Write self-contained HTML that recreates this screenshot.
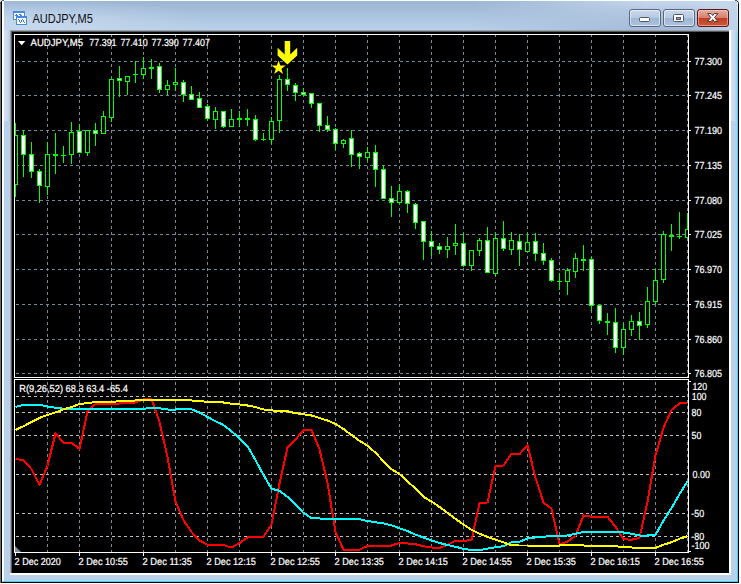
<!DOCTYPE html>
<html lang="en"><head><meta charset="utf-8"><title>AUDJPY,M5</title>
<style>html,body{margin:0;padding:0;background:#fff;overflow:hidden}svg{display:block}text{font-family:"Liberation Sans",sans-serif;white-space:pre}text.c{text-rendering:geometricPrecision;stroke:#fff;stroke-width:.22px}</style>
</head><body>
<svg width="741" height="584" viewBox="0 0 741 584">
<defs>
<linearGradient id="tb" x1="0" y1="0" x2="0" y2="1"><stop offset="0" stop-color="#9bb5d3"/><stop offset="1" stop-color="#b9d1ea"/></linearGradient>
<radialGradient id="tl" gradientUnits="userSpaceOnUse" cx="0" cy="0" r="1" gradientTransform="translate(28 26) scale(190 27)"><stop offset="0" stop-color="#c8d9ed" stop-opacity="0.95"/><stop offset="0.5" stop-color="#c4d6eb" stop-opacity="0.6"/><stop offset="1" stop-color="#b9d1ea" stop-opacity="0"/></radialGradient>
<linearGradient id="tr" x1="0" y1="0" x2="0" y2="1"><stop offset="0" stop-color="#c6d8ec"/><stop offset="0.35" stop-color="#b4c9e2"/><stop offset="1" stop-color="#a2b9d6"/></linearGradient>
<linearGradient id="trm" gradientUnits="userSpaceOnUse" x1="470" y1="0" x2="650" y2="0"><stop offset="0" stop-color="#fff" stop-opacity="0"/><stop offset="1" stop-color="#fff" stop-opacity="1"/></linearGradient>
<mask id="mr" maskUnits="userSpaceOnUse" x="460" y="0" width="281" height="32"><rect x="460" y="0" width="281" height="32" fill="url(#trm)"/></mask>
<linearGradient id="cy" gradientUnits="userSpaceOnUse" x1="0" y1="2" x2="0" y2="60"><stop offset="0" stop-color="#eaf4fc"/><stop offset="0.4" stop-color="#a8e4f6"/><stop offset="1" stop-color="#3fd2f2"/></linearGradient>
<linearGradient id="bt" x1="0" y1="0" x2="0" y2="1"><stop offset="0" stop-color="#cbd9ec"/><stop offset="0.48" stop-color="#b6c9e2"/><stop offset="0.5" stop-color="#9fb6d4"/><stop offset="1" stop-color="#adc3de"/></linearGradient>
<linearGradient id="cl" x1="0" y1="0" x2="0" y2="1"><stop offset="0" stop-color="#e8b1a5"/><stop offset="0.48" stop-color="#d6806d"/><stop offset="0.5" stop-color="#c03c20"/><stop offset="1" stop-color="#cd5a3e"/></linearGradient>
<clipPath id="cm"><rect x="15" y="35" width="673" height="342"/></clipPath>
<clipPath id="ci"><rect x="15" y="380" width="673" height="172"/></clipPath>
<clipPath id="cx"><rect x="15" y="35" width="673" height="517"/></clipPath>
<linearGradient id="rf" x1="0" y1="0" x2="0" y2="1"><stop offset="0" stop-color="#c6d8ec"/><stop offset="1" stop-color="#b9d1ea"/></linearGradient>
<linearGradient id="sf" x1="0" y1="0" x2="1" y2="0"><stop offset="0" stop-color="#d4e3f4"/><stop offset="0.6" stop-color="#c6d9ee"/><stop offset="1" stop-color="#b2cae6"/></linearGradient>
<linearGradient id="te" x1="0" y1="0" x2="1" y2="0"><stop offset="0" stop-color="#c6d9ee" stop-opacity="0"/><stop offset="0.8" stop-color="#c6d9ee" stop-opacity="0.75"/><stop offset="1" stop-color="#c2d6ec" stop-opacity="0.9"/></linearGradient>
</defs>
<g shape-rendering="crispEdges">
<rect x="0" y="0" width="741" height="584" fill="#ffffff"/>
<rect x="0" y="0" width="739" height="583" fill="#b9d1ea"/>
<rect x="2" y="1" width="736" height="29" fill="url(#tb)"/>
<rect x="2" y="1" width="230" height="29" fill="url(#tl)"/>
<rect x="460" y="1" width="278" height="29" fill="url(#tr)" mask="url(#mr)"/>
<rect x="4" y="30" width="6" height="91" fill="url(#sf)"/>
<rect x="690" y="1" width="48" height="29" fill="url(#te)"/>
<rect x="731" y="30" width="6" height="91" fill="url(#sf)"/>
<rect x="4" y="0" width="731" height="1" fill="#fbfcfe"/>
<rect x="0" y="4" width="1" height="579" fill="#6e6e6e"/>
<rect x="1" y="2" width="1" height="581" fill="#000000"/>
<rect x="2" y="1" width="2" height="580" fill="#ffffff"/>
<rect x="737" y="2" width="1" height="580" fill="url(#cy)"/>
<rect x="738" y="3" width="1" height="580" fill="#000000"/>
<rect x="3" y="581" width="735" height="1" fill="#3fd2f2"/>
<rect x="1" y="582" width="738" height="1" fill="#000000"/>
<rect x="0" y="0" width="4" height="1" fill="#e0e0e0"/><rect x="0" y="1" width="1" height="3" fill="#e0e0e0"/>
<rect x="2" y="0" width="2" height="1" fill="#555555"/><rect x="1" y="1" width="1" height="1" fill="#222222"/><rect x="0" y="2" width="1" height="2" fill="#555555"/>
<rect x="735" y="0" width="4" height="1" fill="#e8e8e8"/><rect x="738" y="0" width="1" height="3" fill="#e8e8e8"/>
<rect x="735" y="0" width="2" height="1" fill="#555555"/><rect x="737" y="1" width="1" height="1" fill="#222222"/><rect x="738" y="2" width="1" height="2" fill="#444444"/>
<rect x="10" y="30" width="721" height="545" fill="#ffffff"/>
<rect x="10" y="30" width="719" height="543" fill="#9aa3ae"/>
<rect x="11" y="31" width="718" height="542" fill="#5a5a5a"/>
<rect x="12" y="32" width="717" height="541" fill="#000000"/>
</g>
<g shape-rendering="crispEdges">
<rect x="13" y="11" width="12" height="9" fill="#4784ff"/>
<path d="M13.5 11.5H24.5V19.5H13.5Z" fill="none" stroke="#3f9c86" stroke-opacity="0.75" stroke-width="1" stroke-dasharray="1 1"/>
<rect x="14" y="13" width="10" height="6" fill="#ffffff"/>
<rect x="15" y="15" width="1" height="1" fill="#3a78f2"/>
<rect x="16" y="14" width="1" height="1" fill="#3a78f2"/>
<rect x="16" y="15" width="1" height="1" fill="#3a78f2"/>
<rect x="17" y="15" width="1" height="1" fill="#3a78f2"/>
<rect x="19" y="14" width="1" height="1" fill="#3a78f2"/>
<rect x="20" y="14" width="1" height="1" fill="#3a78f2"/>
<rect x="20" y="15" width="1" height="1" fill="#3a78f2"/>
<rect x="21" y="15" width="1" height="1" fill="#3a78f2"/>
<rect x="21" y="16" width="1" height="1" fill="#3a78f2"/>
<rect x="16" y="16" width="11" height="9" fill="#4784ff"/>
<path d="M16.5 16.5H26.5V24.5H16.5Z" fill="none" stroke="#3f9c86" stroke-opacity="0.75" stroke-width="1" stroke-dasharray="1 1"/>
<rect x="17" y="18" width="9" height="6" fill="#ffffff"/>
<rect x="18" y="19" width="1" height="1" fill="#3a78f2"/>
<rect x="19" y="20" width="1" height="1" fill="#3a78f2"/>
<rect x="19" y="21" width="1" height="1" fill="#3a78f2"/>
<rect x="20" y="22" width="1" height="1" fill="#3a78f2"/>
<rect x="21" y="21" width="1" height="1" fill="#3a78f2"/>
<rect x="21" y="20" width="1" height="1" fill="#3a78f2"/>
<rect x="22" y="19" width="1" height="1" fill="#3a78f2"/>
<rect x="23" y="20" width="1" height="1" fill="#3a78f2"/>
<rect x="23" y="21" width="1" height="1" fill="#3a78f2"/>
<rect x="24" y="22" width="1" height="1" fill="#3a78f2"/>
</g>
<text x="32.4" y="23" font-size="13" fill="#101018" textLength="60.4" lengthAdjust="spacingAndGlyphs">AUDJPY,M5</text>
<rect x="629.5" y="9.5" width="31" height="17" rx="2.5" ry="2.5" fill="url(#bt)" stroke="#56677f" stroke-width="1"/>
<rect x="630.5" y="10.5" width="29" height="15" rx="2" ry="2" fill="none" stroke="#ffffff" stroke-width="1" opacity="0.55"/>
<rect x="663.5" y="9.5" width="31" height="17" rx="2.5" ry="2.5" fill="url(#bt)" stroke="#56677f" stroke-width="1"/>
<rect x="664.5" y="10.5" width="29" height="15" rx="2" ry="2" fill="none" stroke="#ffffff" stroke-width="1" opacity="0.55"/>
<rect x="697.5" y="9.5" width="31" height="17" rx="2.5" ry="2.5" fill="url(#cl)" stroke="#5b1a14" stroke-width="1"/>
<rect x="698.5" y="10.5" width="29" height="15" rx="2" ry="2" fill="none" stroke="#ffd0c4" stroke-width="1" opacity="0.55"/>
<rect x="639.5" y="17.5" width="10" height="4" rx="1" fill="#ffffff" stroke="#4d5566" stroke-width="1"/>
<rect x="673.5" y="14.5" width="10" height="7" rx="1" fill="#ffffff" stroke="#4d5566" stroke-width="1"/>
<rect x="676.5" y="17.5" width="4" height="2" fill="#8fa9cc" stroke="#4d5566" stroke-width="1"/>
<path d="M707.6 13.6 h3.6 l1.5 1.9 l1.5 -1.9 h3.6 l-3.2 3.9 l3.2 3.9 h-3.6 l-1.5 -1.9 l-1.5 1.9 h-3.6 l3.2 -3.9 z" fill="#ffffff" stroke="#4a3636" stroke-width="1" stroke-linejoin="round"/>
<g shape-rendering="crispEdges" fill="none" stroke-width="1">
<path d="M47.5 34V377M47.5 376V553M79.5 34V377M79.5 376V553M111.5 34V377M111.5 376V553M143.5 34V377M143.5 376V553M175.5 34V377M175.5 376V553M207.5 34V377M207.5 376V553M239.5 34V377M239.5 376V553M271.5 34V377M271.5 376V553M303.5 34V377M303.5 376V553M335.5 34V377M335.5 376V553M367.5 34V377M367.5 376V553M399.5 34V377M399.5 376V553M431.5 34V377M431.5 376V553M463.5 34V377M463.5 376V553M495.5 34V377M495.5 376V553M527.5 34V377M527.5 376V553M559.5 34V377M559.5 376V553M591.5 34V377M591.5 376V553M623.5 34V377M623.5 376V553M655.5 34V377M655.5 376V553M687.5 34V377M687.5 376V553" stroke="#778899" stroke-dasharray="3 3"/>
<path d="M10 61.5H688M10 95.5H688M10 130.5H688M10 165.5H688M10 200.5H688M10 234.5H688M10 269.5H688M10 304.5H688M10 339.5H688M10 373.5H688" stroke="#778899" stroke-dasharray="3 3" clip-path="url(#cx)"/>
<path d="M10 396.5H688M10 412.5H688M10 435.5H688M10 474.5H688M10 513.5H688M10 536.5H688" stroke="#c0c0c0" stroke-dasharray="3 3" clip-path="url(#cx)"/>
</g>
<g shape-rendering="crispEdges" clip-path="url(#cm)">
<path d="M15.5 123V197M23.5 130V177M31.5 142V178M39.5 169V203M47.5 142V195M55.5 133V174M63.5 146V163M71.5 122V164M79.5 124V153M87.5 130V156M95.5 123V146M103.5 111V134M111.5 79V122M119.5 66V97M127.5 76V95M135.5 61V83M143.5 57V79M151.5 59V79M159.5 63V93M167.5 80V95M175.5 68V91M183.5 80V102M191.5 86V100M199.5 92V108M207.5 104V121M215.5 107V129M223.5 111V128M231.5 109V127M239.5 111V127M247.5 109V126M255.5 115V141M263.5 133V141M271.5 117V144M279.5 75V133M287.5 68V91M295.5 83V101M303.5 88V96M311.5 93V108M319.5 103V132M327.5 116V132M335.5 128V150M343.5 139V148M351.5 130V167M359.5 152V169M367.5 147V161M375.5 145V187M383.5 165V199M391.5 186V217M399.5 184V204M407.5 190V213M415.5 203V229M423.5 221V260M431.5 231V256M439.5 243V254M447.5 237V258M455.5 224V255M463.5 233V267M471.5 250V271M479.5 238V256M487.5 227V273M495.5 232V276M503.5 221V251M511.5 232V255M519.5 234V266M527.5 233V252M535.5 233V261M543.5 243V265M551.5 258V282M559.5 273V290M567.5 268V295M575.5 253V278M583.5 245V271M591.5 257V311M599.5 305V324M607.5 313V335M615.5 308V353M623.5 323V355M631.5 315V336M639.5 312V340M647.5 287V328M655.5 269V304M663.5 231V283M671.5 224V251M679.5 212V239M687.5 213V239" stroke="#00ff00" stroke-width="1" fill="none"/>
<path d="M13.5 135.5h4v49h-4zM45.5 154.5h4v32h-4zM69.5 132.5h4v22h-4zM85.5 130.5h4v22h-4zM101.5 116.5h4v17h-4zM109.5 79.5h4v38h-4zM125.5 76.5h4v5h-4zM141.5 68.5h4v6h-4zM165.5 85.5h4v4h-4zM173.5 82.5h4v2h-4zM213.5 111.5h4v8h-4zM229.5 119.5h4v7h-4zM269.5 121.5h4v18h-4zM277.5 79.5h4v41h-4zM341.5 140.5h4v3h-4zM365.5 152.5h4v5h-4zM397.5 191.5h4v11h-4zM445.5 246.5h4v3h-4zM453.5 243.5h4v2h-4zM469.5 250.5h4v15h-4zM477.5 240.5h4v10h-4zM493.5 238.5h4v35h-4zM509.5 240.5h4v9h-4zM525.5 242.5h4v9h-4zM565.5 270.5h4v11h-4zM573.5 258.5h4v13h-4zM621.5 329.5h4v18h-4zM629.5 321.5h4v8h-4zM645.5 301.5h4v23h-4zM653.5 280.5h4v21h-4zM661.5 234.5h4v45h-4zM685.5 229.5h4v8h-4z" stroke="#00ff00" stroke-width="1" fill="#000000"/>
<path d="M21.5 135.5h4v19h-4zM29.5 154.5h4v17h-4zM37.5 171.5h4v14h-4zM77.5 131.5h4v21h-4zM93.5 130.5h4v3h-4zM117.5 78.5h4v2h-4zM157.5 66.5h4v23h-4zM181.5 82.5h4v12h-4zM189.5 94.5h4v5h-4zM197.5 98.5h4v9h-4zM205.5 106.5h4v12h-4zM221.5 111.5h4v15h-4zM253.5 119.5h4v20h-4zM285.5 79.5h4v5h-4zM293.5 85.5h4v7h-4zM301.5 92.5h4v2h-4zM309.5 93.5h4v10h-4zM317.5 103.5h4v22h-4zM325.5 125.5h4v4h-4zM333.5 129.5h4v14h-4zM349.5 138.5h4v16h-4zM357.5 153.5h4v3h-4zM373.5 152.5h4v17h-4zM381.5 169.5h4v29h-4zM389.5 198.5h4v4h-4zM405.5 191.5h4v12h-4zM413.5 204.5h4v18h-4zM421.5 221.5h4v20h-4zM429.5 241.5h4v5h-4zM437.5 246.5h4v3h-4zM461.5 243.5h4v22h-4zM485.5 240.5h4v32h-4zM501.5 238.5h4v10h-4zM517.5 241.5h4v8h-4zM533.5 241.5h4v12h-4zM541.5 253.5h4v7h-4zM549.5 260.5h4v20h-4zM589.5 259.5h4v46h-4zM597.5 305.5h4v15h-4zM613.5 322.5h4v25h-4zM637.5 321.5h4v4h-4z" stroke="#00ff00" stroke-width="1" fill="#ffffff"/>
<path d="M53 154h5v2h-5zM61 155h5v1h-5zM133 74h5v1h-5zM149 67h5v2h-5zM237 118h5v2h-5zM245 118h5v2h-5zM261 139h5v1h-5zM557 281h5v1h-5zM581 259h5v2h-5zM605 321h5v2h-5zM669 235h5v2h-5zM677 236h5v1h-5z" fill="#00ff00"/>
</g>
<path d="M284.7 41.1H290.2V54.5L297.2 47.8V55.4L287.4 64.6L277.6 55.4V47.8L284.7 54.5Z" fill="#ffff00"/>
<polygon points="278.60,60.40 280.33,65.51 285.73,65.58 281.41,68.81 283.01,73.97 278.60,70.85 274.19,73.97 275.79,68.81 271.47,65.58 276.87,65.51" fill="#ffff00"/>
<g shape-rendering="crispEdges" clip-path="url(#ci)">
<polyline points="15.5,459.20 23.5,460.00 31.5,469.00 39.5,484.90 47.5,465.50 55.5,433.40 63.5,442.60 71.5,443.00 79.5,448.80 87.5,411.60 95.5,404.00 103.5,403.75 111.5,403.75 119.5,403.50 127.5,403.00 135.5,402.50 143.5,399.25 151.5,398.75 159.5,422.00 167.5,457.00 175.5,501.50 183.5,520.25 191.5,532.00 199.5,540.50 207.5,544.75 215.5,545.00 223.5,545.00 231.5,547.50 239.5,543.00 247.5,537.50 255.5,537.00 263.5,536.75 271.5,524.25 279.5,483.50 287.5,447.50 295.5,439.25 303.5,430.50 311.5,430.00 319.5,449.25 327.5,483.00 335.5,532.00 343.5,549.75 351.5,549.75 359.5,549.75 367.5,546.00 375.5,545.50 383.5,545.50 391.5,545.50 399.5,543.00 407.5,543.50 415.5,544.25 423.5,546.25 431.5,547.50 439.5,547.90 447.5,544.80 455.5,540.60 463.5,540.60 471.5,540.40 479.5,503.00 487.5,502.50 495.5,466.00 503.5,465.50 511.5,453.75 519.5,454.25 527.5,445.00 535.5,478.00 543.5,502.50 551.5,508.75 559.5,544.25 567.5,541.75 575.5,535.50 583.5,515.50 591.5,516.75 599.5,516.75 607.5,516.75 615.5,526.75 623.5,539.25 631.5,539.75 639.5,538.00 647.5,501.75 655.5,455.30 663.5,427.70 671.5,409.90 679.5,403.50 687.5,403.20" fill="none" stroke="#ff0000" stroke-width="2" stroke-linejoin="round"/>
<polyline points="15.5,406.90 23.5,404.80 31.5,404.80 39.5,404.80 47.5,406.50 55.5,407.70 63.5,408.70 71.5,409.00 79.5,409.00 87.5,409.00 95.5,409.00 103.5,409.30 111.5,409.20 119.5,409.00 127.5,409.00 135.5,409.00 143.5,408.75 151.5,408.00 159.5,408.25 167.5,409.50 175.5,409.50 183.5,409.25 191.5,409.25 199.5,412.50 207.5,417.00 215.5,421.25 223.5,425.00 231.5,431.25 239.5,438.25 247.5,446.25 255.5,460.00 263.5,475.00 271.5,488.75 279.5,490.75 287.5,496.75 295.5,504.25 303.5,513.00 311.5,518.00 319.5,518.50 327.5,518.75 335.5,519.00 343.5,518.75 351.5,518.75 359.5,519.25 367.5,521.00 375.5,522.25 383.5,523.40 391.5,525.25 399.5,528.25 407.5,531.00 415.5,534.75 423.5,537.50 431.5,540.50 439.5,543.00 447.5,545.00 455.5,546.75 463.5,548.80 471.5,550.10 479.5,550.10 487.5,548.60 495.5,547.20 503.5,546.20 511.5,542.25 519.5,541.75 527.5,538.50 535.5,537.50 543.5,536.75 551.5,536.00 559.5,536.00 567.5,535.50 575.5,533.75 583.5,532.00 591.5,531.75 599.5,531.75 607.5,531.75 615.5,531.75 623.5,532.50 631.5,533.75 639.5,535.50 647.5,535.50 655.5,535.00 663.5,520.50 671.5,508.00 679.5,494.25 687.5,481.25" fill="none" stroke="#00ffff" stroke-width="2" stroke-linejoin="round"/>
<polyline points="15.5,430.00 23.5,426.20 31.5,422.00 39.5,417.90 47.5,414.90 55.5,412.40 63.5,409.40 71.5,407.00 79.5,404.00 87.5,403.20 95.5,402.00 103.5,402.00 111.5,401.90 119.5,401.25 127.5,401.00 135.5,400.50 143.5,400.00 151.5,400.00 159.5,400.00 167.5,400.00 175.5,400.00 183.5,400.00 191.5,400.50 199.5,401.25 207.5,401.75 215.5,402.00 223.5,402.50 231.5,403.75 239.5,404.50 247.5,405.50 255.5,407.00 263.5,409.50 271.5,410.40 279.5,411.00 287.5,411.25 295.5,413.25 303.5,414.20 311.5,415.50 319.5,418.00 327.5,420.50 335.5,424.00 343.5,429.00 351.5,435.00 359.5,440.75 367.5,445.75 375.5,452.75 383.5,461.25 391.5,469.25 399.5,474.00 407.5,481.50 415.5,488.60 423.5,496.90 431.5,501.50 439.5,507.00 447.5,512.75 455.5,518.90 463.5,524.50 471.5,529.70 479.5,533.70 487.5,536.90 495.5,539.60 503.5,542.30 511.5,545.40 519.5,545.50 527.5,545.50 535.5,545.50 543.5,545.50 551.5,545.50 559.5,545.50 567.5,545.00 575.5,545.00 583.5,545.50 591.5,545.50 599.5,546.00 607.5,546.00 615.5,546.25 623.5,547.25 631.5,547.50 639.5,548.00 647.5,548.00 655.5,548.00 663.5,544.75 671.5,542.25 679.5,538.75 687.5,536.25" fill="none" stroke="#ffff00" stroke-width="2" stroke-linejoin="round"/>
</g>
<g shape-rendering="crispEdges" fill="#ffffff">
<rect x="14" y="34" width="675" height="1"/>
<rect x="14" y="34" width="1" height="519"/>
<rect x="688" y="34" width="1" height="519"/>
<rect x="14" y="377" width="675" height="1"/>
<rect x="14" y="378" width="675" height="1" fill="#000000"/>
<rect x="14" y="379" width="675" height="1"/>
<rect x="14" y="552" width="675" height="1"/>
<rect x="689" y="61" width="2" height="1"/>
<rect x="689" y="95" width="2" height="1"/>
<rect x="689" y="130" width="2" height="1"/>
<rect x="689" y="165" width="2" height="1"/>
<rect x="689" y="200" width="2" height="1"/>
<rect x="689" y="234" width="2" height="1"/>
<rect x="689" y="269" width="2" height="1"/>
<rect x="689" y="304" width="2" height="1"/>
<rect x="689" y="339" width="2" height="1"/>
<rect x="689" y="373" width="2" height="1"/>
<rect x="689" y="381" width="2" height="1"/>
<rect x="689" y="551" width="2" height="1"/>
<rect x="15" y="553" width="1" height="3"/>
<rect x="79" y="553" width="1" height="3"/>
<rect x="143" y="553" width="1" height="3"/>
<rect x="207" y="553" width="1" height="3"/>
<rect x="271" y="553" width="1" height="3"/>
<rect x="335" y="553" width="1" height="3"/>
<rect x="399" y="553" width="1" height="3"/>
<rect x="463" y="553" width="1" height="3"/>
<rect x="527" y="553" width="1" height="3"/>
<rect x="591" y="553" width="1" height="3"/>
<rect x="655" y="553" width="1" height="3"/>
</g>
<path d="M15 546V552H21Z" fill="#7f8fa6"/>
<path d="M18 41H25.4L21.7 45.2Z" fill="#ffffff"/>
<text class="c" x="30.5" y="46" font-size="10.2" fill="#ffffff" textLength="52.5" lengthAdjust="spacingAndGlyphs">AUDJPY,M5</text>
<text class="c" x="89.3" y="46" font-size="10.2" fill="#ffffff" textLength="27.3" lengthAdjust="spacingAndGlyphs">77.391</text>
<text class="c" x="120.4" y="46" font-size="10.2" fill="#ffffff" textLength="27.3" lengthAdjust="spacingAndGlyphs">77.410</text>
<text class="c" x="151.5" y="46" font-size="10.2" fill="#ffffff" textLength="27.3" lengthAdjust="spacingAndGlyphs">77.390</text>
<text class="c" x="182.60000000000002" y="46" font-size="10.2" fill="#ffffff" textLength="27.3" lengthAdjust="spacingAndGlyphs">77.407</text>
<text class="c" x="19.2" y="392" font-size="10.2" fill="#ffffff" textLength="108.8" lengthAdjust="spacingAndGlyphs">R(9,26,52) 68.3 63.4 -65.4</text>
<text class="c" x="694.4" y="65" font-size="10.2" fill="#ffffff" textLength="27.6" lengthAdjust="spacingAndGlyphs">77.300</text>
<text class="c" x="694.4" y="99" font-size="10.2" fill="#ffffff" textLength="27.6" lengthAdjust="spacingAndGlyphs">77.245</text>
<text class="c" x="694.4" y="134" font-size="10.2" fill="#ffffff" textLength="27.6" lengthAdjust="spacingAndGlyphs">77.190</text>
<text class="c" x="694.4" y="169" font-size="10.2" fill="#ffffff" textLength="27.6" lengthAdjust="spacingAndGlyphs">77.135</text>
<text class="c" x="694.4" y="204" font-size="10.2" fill="#ffffff" textLength="27.6" lengthAdjust="spacingAndGlyphs">77.080</text>
<text class="c" x="694.4" y="238" font-size="10.2" fill="#ffffff" textLength="27.6" lengthAdjust="spacingAndGlyphs">77.025</text>
<text class="c" x="694.4" y="273" font-size="10.2" fill="#ffffff" textLength="27.6" lengthAdjust="spacingAndGlyphs">76.970</text>
<text class="c" x="694.4" y="308" font-size="10.2" fill="#ffffff" textLength="27.6" lengthAdjust="spacingAndGlyphs">76.915</text>
<text class="c" x="694.4" y="343" font-size="10.2" fill="#ffffff" textLength="27.6" lengthAdjust="spacingAndGlyphs">76.860</text>
<text class="c" x="694.4" y="377" font-size="10.2" fill="#ffffff" textLength="27.6" lengthAdjust="spacingAndGlyphs">76.805</text>
<text class="c" x="692.4" y="390" font-size="10.2" fill="#ffffff" textLength="14.7" lengthAdjust="spacingAndGlyphs">120</text>
<text class="c" x="691.8" y="400" font-size="10.2" fill="#ffffff" textLength="14.7" lengthAdjust="spacingAndGlyphs">100</text>
<text class="c" x="691.5" y="416" font-size="10.2" fill="#ffffff" textLength="9.8" lengthAdjust="spacingAndGlyphs">80</text>
<text class="c" x="691.5" y="439" font-size="10.2" fill="#ffffff" textLength="9.8" lengthAdjust="spacingAndGlyphs">50</text>
<text class="c" x="692.4" y="477.7" font-size="10.2" fill="#ffffff" textLength="17.5" lengthAdjust="spacingAndGlyphs">0.00</text>
<text class="c" x="691.3" y="516.6" font-size="10.2" fill="#ffffff" textLength="12.9" lengthAdjust="spacingAndGlyphs">-50</text>
<text class="c" x="691.3" y="539.6" font-size="10.2" fill="#ffffff" textLength="12.9" lengthAdjust="spacingAndGlyphs">-80</text>
<text class="c" x="691.6" y="548.6" font-size="10.2" fill="#ffffff" textLength="18" lengthAdjust="spacingAndGlyphs">-100</text>
<text class="c" x="14.6" y="565" font-size="10.2" fill="#ffffff" textLength="46.3" lengthAdjust="spacingAndGlyphs">2 Dec 2020</text>
<text class="c" x="78.6" y="565" font-size="10.2" fill="#ffffff" textLength="49.3" lengthAdjust="spacingAndGlyphs">2 Dec 10:55</text>
<text class="c" x="142.6" y="565" font-size="10.2" fill="#ffffff" textLength="49.3" lengthAdjust="spacingAndGlyphs">2 Dec 11:35</text>
<text class="c" x="206.6" y="565" font-size="10.2" fill="#ffffff" textLength="49.3" lengthAdjust="spacingAndGlyphs">2 Dec 12:15</text>
<text class="c" x="270.6" y="565" font-size="10.2" fill="#ffffff" textLength="49.3" lengthAdjust="spacingAndGlyphs">2 Dec 12:55</text>
<text class="c" x="334.6" y="565" font-size="10.2" fill="#ffffff" textLength="49.3" lengthAdjust="spacingAndGlyphs">2 Dec 13:35</text>
<text class="c" x="398.6" y="565" font-size="10.2" fill="#ffffff" textLength="49.3" lengthAdjust="spacingAndGlyphs">2 Dec 14:15</text>
<text class="c" x="462.6" y="565" font-size="10.2" fill="#ffffff" textLength="49.3" lengthAdjust="spacingAndGlyphs">2 Dec 14:55</text>
<text class="c" x="526.6" y="565" font-size="10.2" fill="#ffffff" textLength="49.3" lengthAdjust="spacingAndGlyphs">2 Dec 15:35</text>
<text class="c" x="590.6" y="565" font-size="10.2" fill="#ffffff" textLength="49.3" lengthAdjust="spacingAndGlyphs">2 Dec 16:15</text>
<text class="c" x="654.6" y="565" font-size="10.2" fill="#ffffff" textLength="49.3" lengthAdjust="spacingAndGlyphs">2 Dec 16:55</text>
</svg></body></html>
